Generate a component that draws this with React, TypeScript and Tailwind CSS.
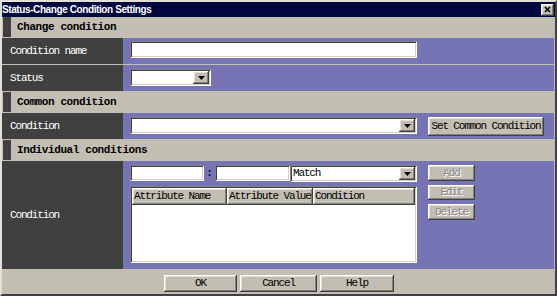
import React from "react";

const mono = "font-['Liberation_Mono',monospace] text-[11px] tracking-[-1.15px] text-black";
const raised =
  "bg-[#c2beb2] shadow-[inset_-1px_-1px_0_#404040,inset_1px_1px_0_#ffffff,inset_-2px_-2px_0_#808080,inset_2px_2px_0_#e4e0d8]";
const sunken =
  "bg-white shadow-[inset_1px_1px_0_#808080,inset_-1px_-1px_0_#ffffff,inset_2px_2px_0_#404040,inset_-2px_-2px_0_#d4d0c8]";

function Section({ title }: { title: string }) {
  return (
    <div className="flex h-[20px] items-stretch">
      <div className="ml-[1px] w-[8px] bg-[#404040]" />
      <div className="flex items-center pl-[6px] font-['Liberation_Mono',monospace] text-[11px] font-bold tracking-[-0.4px] text-black">
        {title}
      </div>
    </div>
  );
}

function Row({ label, h, children }: { label: string; h: string; children: React.ReactNode }) {
  return (
    <div className={`flex ${h}`}>
      <div className={`flex w-[121px] items-center bg-[#404040] pl-[8px] ${mono}`}>
        <span className="text-white">{label}</span>
      </div>
      <div className="flex-1 bg-[#7674b4] pl-[7px]">{children}</div>
    </div>
  );
}

function Arrow() {
  return (
    <div className={`flex h-full w-[16px] items-center justify-center ${raised}`}>
      <svg width="7" height="4" viewBox="0 0 7 4">
        <path d="M0 0h7L3.5 4z" fill="#000" />
      </svg>
    </div>
  );
}

function Select({ w, value = "" }: { w: string; value?: string }) {
  return (
    <div className={`flex h-[17px] ${w} items-stretch p-[2px] ${sunken}`}>
      <div className={`flex flex-1 items-center pl-[1px] ${mono}`}>{value}</div>
      <Arrow />
    </div>
  );
}

function Btn({ label, w, h, disabled }: { label: string; w: string; h: string; disabled?: boolean }) {
  return (
    <div className={`flex ${w} ${h} items-center justify-center ${raised} ${mono}`}>
      <span className={disabled ? "text-[#8a8a8a] [text-shadow:1px_1px_0_#ffffff]" : "text-black"}>{label}</span>
    </div>
  );
}

export default function App() {
  return (
    <div className="flex h-[296px] w-[557px] flex-col border-2 border-t-[#e4e0d8] border-l-[#e4e0d8] border-r-[#404040] border-b-[#404040] bg-[#c2beb2]">
      <div className="flex h-[15px] items-center justify-between bg-[#00083f] pr-[1px]">
        <span className="font-['Liberation_Sans',sans-serif] text-[10px] font-bold tracking-[-0.4px] text-white">
          Status-Change Condition Settings
        </span>
        <div className={`flex h-[12px] w-[13px] items-center justify-center ${raised}`}>
          <svg width="7" height="7" viewBox="0 0 7 7">
            <path d="M1 1l5 5M6 1L1 6" stroke="#000" strokeWidth="1.6" />
          </svg>
        </div>
      </div>
      <div className="flex flex-1 flex-col gap-[1px] pr-[1px]">
        <Section title="Change condition" />
        <Row label="Condition name" h="h-[26px]">
          <div className={`mt-[3px] h-[17px] w-[287px] ${sunken}`} />
        </Row>
        <Row label="Status" h="h-[26px]">
          <div className="pt-[4px]">
            <Select w="w-[81px]" />
          </div>
        </Row>
        <Section title="Common condition" />
        <Row label="Condition" h="h-[26px]">
          <div className="flex items-start gap-[11px] pt-[4px]">
            <Select w="w-[287px]" />
            <Btn label="Set Common Condition" w="w-[116px]" h="h-[19px]" />
          </div>
        </Row>
        <Section title="Individual conditions" />
        <Row label="Condition" h="h-[108px]">
          <div className="flex gap-[11px] pt-[4px]">
            <div className="flex w-[287px] flex-col gap-[5px]">
              <div className="flex h-[16px] items-stretch">
                <div className={`w-[74px] ${sunken}`} />
                <div className="flex w-[11px] items-center justify-center font-['Liberation_Mono',monospace] text-[11px] font-bold text-black">
                  :
                </div>
                <div className={`w-[75px] ${sunken}`} />
                <Select w="w-[127px]" value="Match" />
              </div>
              <div className={`flex h-[77px] flex-col p-[2px] ${sunken}`}>
                <div className="flex h-[17px]">
                  <div className={`flex w-[95px] items-center pl-[2px] ${raised} ${mono}`}>Attribute Name</div>
                  <div className={`flex w-[86px] items-center overflow-hidden pl-[2px] ${raised} ${mono}`}>Attribute Value</div>
                  <div className={`flex flex-1 items-center pl-[2px] ${raised} ${mono}`}>Condition</div>
                </div>
              </div>
            </div>
            <div className="flex flex-col gap-[4px]">
              <Btn label="Add" w="w-[47px]" h="h-[16px]" disabled />
              <Btn label="Edit" w="w-[47px]" h="h-[15px]" disabled />
              <Btn label="Delete" w="w-[47px]" h="h-[16px]" disabled />
            </div>
          </div>
        </Row>
        <div className="flex justify-center gap-[3px] pl-[2px] pt-[5px]">
          <Btn label="OK" w="w-[73px]" h="h-[17px]" />
          <Btn label="Cancel" w="w-[77px]" h="h-[17px]" />
          <Btn label="Help" w="w-[74px]" h="h-[17px]" />
        </div>
      </div>
    </div>
  );
}
